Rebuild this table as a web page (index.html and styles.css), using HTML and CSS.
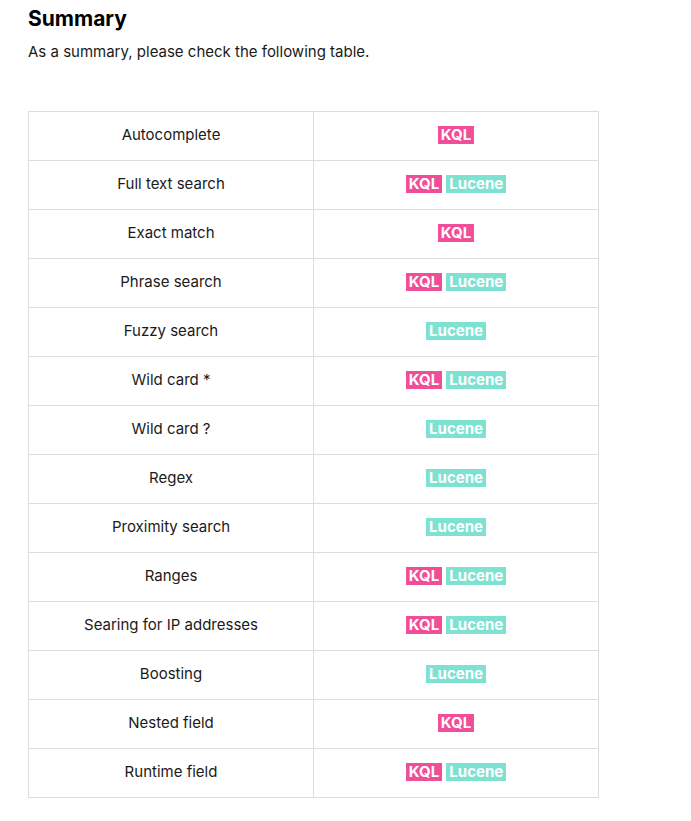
FILE: index.html
```html
<!DOCTYPE html>
<html>
<head>
<meta charset="utf-8">
<link rel="stylesheet" href="styles.css">
</head>
<body>
<main class="page">
  <h2 class="title">Summary</h2>
  <p class="intro">As a summary, please check the following table.</p>
  <table class="summary">
    <tbody>
      <tr><td>Autocomplete</td><td><span class="badge kql">KQL</span></td></tr>
      <tr><td>Full text search</td><td><span class="badge kql">KQL</span> <span class="badge lucene">Lucene</span></td></tr>
      <tr><td>Exact match</td><td><span class="badge kql">KQL</span></td></tr>
      <tr><td>Phrase search</td><td><span class="badge kql">KQL</span> <span class="badge lucene">Lucene</span></td></tr>
      <tr><td>Fuzzy search</td><td><span class="badge lucene">Lucene</span></td></tr>
      <tr><td>Wild card *</td><td><span class="badge kql">KQL</span> <span class="badge lucene">Lucene</span></td></tr>
      <tr><td>Wild card ?</td><td><span class="badge lucene">Lucene</span></td></tr>
      <tr><td>Regex</td><td><span class="badge lucene">Lucene</span></td></tr>
      <tr><td>Proximity search</td><td><span class="badge lucene">Lucene</span></td></tr>
      <tr><td>Ranges</td><td><span class="badge kql">KQL</span> <span class="badge lucene">Lucene</span></td></tr>
      <tr><td>Searing for IP addresses</td><td><span class="badge kql">KQL</span> <span class="badge lucene">Lucene</span></td></tr>
      <tr><td>Boosting</td><td><span class="badge lucene">Lucene</span></td></tr>
      <tr><td>Nested field</td><td><span class="badge kql">KQL</span></td></tr>
      <tr><td>Runtime field</td><td><span class="badge kql">KQL</span> <span class="badge lucene">Lucene</span></td></tr>
    </tbody>
  </table>
</main>
</body>
</html>
```
FILE: styles.css
```css
html, body {
  margin: 0;
  padding: 0;
  background: #ffffff;
}
body {
  font-family: Inter, "Noto Sans", sans-serif;
  color: #000000;
}
.page {
  padding: 5px 28px 0 28px;
}
.title {
  margin: 0;
  font-size: 21px;
  font-weight: 700;
  line-height: 28px;
}
.intro {
  margin: 9px 0 0 0;
  font-size: 15px;
  line-height: 20px;
  color: #1a1a1a;
}
.summary {
  margin-top: 49px;
  width: 571px;
  border-collapse: collapse;
  table-layout: fixed;
}
.summary td {
  border: 1px solid #dddddd;
  height: 44px;
  padding: 0 0 4px 0;
  text-align: center;
  vertical-align: middle;
  font-size: 15px;
  color: #1a1a1a;
}
.badge {
  display: inline-block;
  padding: 0 3px;
  font-size: 15px;
  font-weight: 700;
  line-height: 18px;
  color: #ffffff;
}
.kql {
  background: #f04e98;
}
.lucene {
  background: #7de2d1;
}
```
